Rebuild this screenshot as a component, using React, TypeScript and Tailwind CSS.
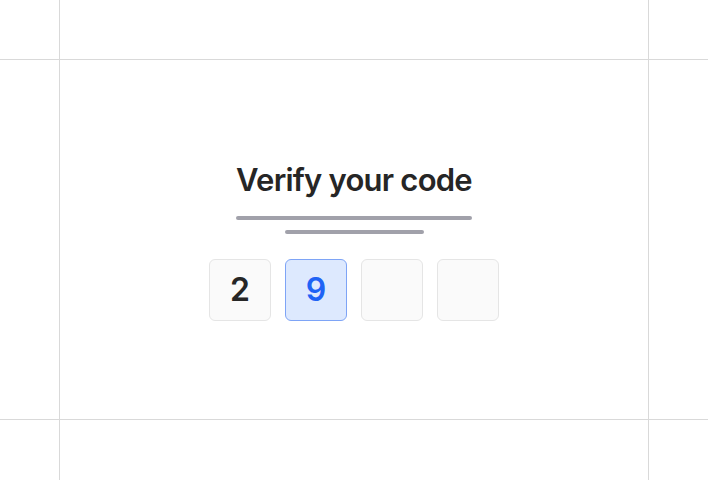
import React from 'react';

const digits = ['2', '9', '', ''];

const CodeBox: React.FC<{ value: string; active?: boolean }> = ({ value, active }) => (
  <div
    className={
      active
        ? 'flex h-[62px] w-[62px] items-center justify-center rounded-[6px] border border-[#7ea4f6] bg-[#dde9fe] text-[32px] font-semibold text-[#1f63f5]'
        : 'flex h-[62px] w-[62px] items-center justify-center rounded-[6px] border border-[#e5e5e5] bg-[#fafafa] text-[32px] font-semibold text-[#262626]'
    }
  >
    {value}
  </div>
);

export default function App() {
  return (
    <div
      className="grid h-[480px] w-[708px] grid-cols-[59px_588px_59px] grid-rows-[59px_359px_60px] gap-px bg-[#d9d9d9]"
      style={{ fontFamily: 'Inter, "Noto Sans", sans-serif' }}
    >
      <div className="bg-white" />
      <div className="bg-white" />
      <div className="bg-white" />
      <div className="bg-white" />
      <div className="flex flex-col items-center justify-center bg-white pt-[2px]">
        <h1 className="text-[31px] leading-[40px] font-semibold tracking-[-0.025em] text-[#262626]">
          Verify your code
        </h1>
        <div className="mt-[16px] h-[4px] w-[236px] rounded-full bg-[#a1a1aa]" />
        <div className="mt-[10px] h-[4px] w-[139px] rounded-full bg-[#a1a1aa]" />
        <div className="mt-[25px] flex gap-[14px]">
          {digits.map((d, i) => (
            <CodeBox key={i} value={d} active={i === 1} />
          ))}
        </div>
      </div>
      <div className="bg-white" />
      <div className="bg-white" />
      <div className="bg-white" />
      <div className="bg-white" />
    </div>
  );
}
